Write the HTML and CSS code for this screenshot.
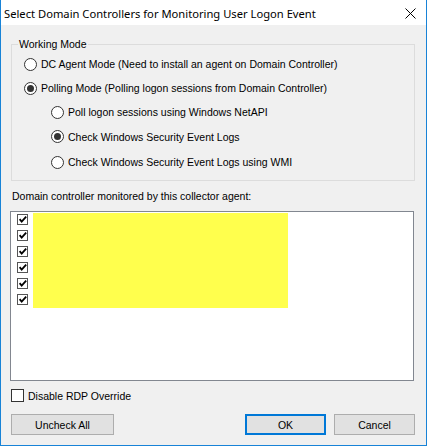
FILE: index.html
```html
<!DOCTYPE html>
<html>
<head>
<meta charset="utf-8">
<link rel="stylesheet" href="styles.css">
</head>
<body>
<div class="window">
  <div class="titlebar">
    <span class="title">Select Domain Controllers for Monitoring User Logon Event</span>
    <svg class="close" width="11" height="11" viewBox="0 0 11 11"><path d="M0.5 0.5 L10.5 10.5 M10.5 0.5 L0.5 10.5" stroke="#000" stroke-width="1" fill="none"/></svg>
  </div>
  <div class="content">
    <fieldset class="group">
      <legend>Working Mode</legend>
      <div class="row r1"><span class="radio"></span><span>DC Agent Mode (Need to install an agent on Domain Controller)</span></div>
      <div class="row r2"><span class="radio on"></span><span>Polling Mode (Polling logon sessions from Domain Controller)</span></div>
      <div class="row r3 sub"><span class="radio"></span><span>Poll logon sessions using Windows NetAPI</span></div>
      <div class="row r4 sub"><span class="radio on"></span><span>Check Windows Security Event Logs</span></div>
      <div class="row r5 sub"><span class="radio"></span><span>Check Windows Security Event Logs using WMI</span></div>
    </fieldset>
    <div class="list-label">Domain controller monitored by this collector agent:</div>
    <div class="listbox">
      <div class="checks">
        <span class="lcheck"><svg width="11" height="11" viewBox="0 0 11 11"><path d="M2 5 L4.5 8 L10 2" stroke="#000" stroke-width="2.2" fill="none"/></svg></span>
        <span class="lcheck"><svg width="11" height="11" viewBox="0 0 11 11"><path d="M2 5 L4.5 8 L10 2" stroke="#000" stroke-width="2.2" fill="none"/></svg></span>
        <span class="lcheck"><svg width="11" height="11" viewBox="0 0 11 11"><path d="M2 5 L4.5 8 L10 2" stroke="#000" stroke-width="2.2" fill="none"/></svg></span>
        <span class="lcheck"><svg width="11" height="11" viewBox="0 0 11 11"><path d="M2 5 L4.5 8 L10 2" stroke="#000" stroke-width="2.2" fill="none"/></svg></span>
        <span class="lcheck"><svg width="11" height="11" viewBox="0 0 11 11"><path d="M2 5 L4.5 8 L10 2" stroke="#000" stroke-width="2.2" fill="none"/></svg></span>
        <span class="lcheck"><svg width="11" height="11" viewBox="0 0 11 11"><path d="M2 5 L4.5 8 L10 2" stroke="#000" stroke-width="2.2" fill="none"/></svg></span>
      </div>
      <div class="redact"></div>
    </div>
    <div class="rdp"><span class="cbox"></span><span>Disable RDP Override</span></div>
    <div class="buttons">
      <button class="btn uncheck">Uncheck All</button>
      <span class="spacer"></span>
      <button class="btn ok">OK</button>
      <button class="btn cancel">Cancel</button>
    </div>
  </div>
</div>
</body>
</html>
```
FILE: styles.css
```css
* { box-sizing: border-box; }
html, body { margin: 0; padding: 0; background: #fff; }
.window {
  width: 427px;
  height: 446px;
  border: 1px solid #1883d7;
  border-top: none;
  background: #f0f0f0;
  display: flex;
  flex-direction: column;
  font-family: "Liberation Sans", Arial, sans-serif;
  font-size: 10.5px;
  color: #000;
}
.titlebar {
  height: 25px;
  background: #fff;
  display: flex;
  align-items: center;
  padding-left: 3px;
  padding-right: 10px;
}
.title {
  font-family: "Noto Sans", sans-serif;
  font-size: 11.2px;
  flex: 1;
  padding-top: 1px;
}
.close { margin-top: 1px; }
.content {
  flex: 1;
  padding: 0 11px 0 10px;
  display: flex;
  flex-direction: column;
}
.group {
  margin: 13px 0 0 0;
  padding: 0 0 5px 0;
  border: 1px solid #dcdcdc;
  width: 404px;
}
.group legend {
  margin-left: 6px;
  padding: 0 1px;
  line-height: 13px;
}
.row {
  display: flex;
  align-items: center;
  height: 24px;
  padding-left: 12px;
}
.row.r1 { margin-top: 1px; }
.row.r4 { height: 25px; }
.row.r5 { height: 26px; }
.row.sub { padding-left: 39px; }
.radio {
  width: 13px;
  height: 13px;
  border: 1px solid #333;
  border-radius: 50%;
  background: #fff;
  margin-right: 4px;
  display: inline-flex;
  align-items: center;
  justify-content: center;
  flex: none;
}
.radio.on::after {
  content: "";
  width: 7px;
  height: 7px;
  border-radius: 50%;
  background: #333;
}
.list-label {
  margin-top: 9px;
  padding-left: 1px;
  line-height: 13px;
}
.listbox {
  margin-top: 8px;
  margin-left: -1px;
  width: 404px;
  height: 170px;
  border: 1px solid #828790;
  background: #fff;
  display: flex;
  padding: 1px 0 0 6px;
  gap: 5px;
}
.checks {
  display: flex;
  flex-direction: column;
}
.lcheck {
  width: 11px;
  height: 11px;
  border: 1px solid #555;
  margin-top: 1px;
  margin-bottom: 4px;
  display: flex;
  align-items: center;
  justify-content: center;
  background: #fff;
}
.lcheck svg { display: block; margin-top: -1px; }
.redact {
  width: 255px;
  height: 95px;
  background: #ffff4d;
}
.rdp {
  display: flex;
  align-items: center;
  margin-top: 8px;
  height: 13px;
}
.cbox {
  width: 13px;
  height: 13px;
  border: 1px solid #333;
  background: #fff;
  margin-right: 4px;
}
.buttons {
  display: flex;
  margin-top: 12px;
  height: 21px;
}
.btn {
  font-family: "Liberation Sans", Arial, sans-serif;
  font-size: 10.5px;
  height: 21px;
  background: #e1e1e1;
  border: 1px solid #adadad;
  padding: 0;
  color: #000;
}
.uncheck { width: 103px; }
.spacer { flex: 1; }
.ok { width: 81px; border: 2px solid #0078d7; margin-right: 8px; }
.cancel { width: 81px; }
```
